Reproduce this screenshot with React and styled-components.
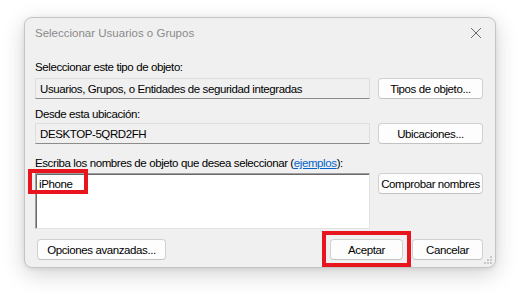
import React from 'react'
import styled, { createGlobalStyle } from 'styled-components'

const Global = createGlobalStyle`
  html, body { margin: 0; padding: 0; background: #ffffff; }
  body {
    font-family: "Liberation Sans", Arial, sans-serif;
    font-size: 11.5px;
    letter-spacing: -0.4px;
    color: #000;
  }
`

const Desktop = styled.div`
  width: 521px;
  height: 293px;
  padding: 17px 0 0 24px;
  box-sizing: border-box;
  overflow: hidden;
`

const Window = styled.div`
  position: relative;
  width: 472px;
  height: 251px;
  box-sizing: border-box;
  background: #f0f0f0;
  border: 1px solid #c4c4c4;
  border-radius: 8px;
  box-shadow: 0 6px 22px rgba(0, 0, 0, 0.18), 0 1px 4px rgba(0, 0, 0, 0.08);
  display: flex;
  flex-direction: column;
`

const TitleBar = styled.div`
  height: 30px;
  display: flex;
  align-items: center;
  justify-content: space-between;
  padding: 0 10px 0 10px;
  color: #8a8a8a;
  font-size: 11.5px;
  letter-spacing: 0;
`

const CloseBtn = styled.div`
  width: 12px;
  height: 12px;
  margin-right: 3px;
  display: flex;
`

const Body = styled.div`
  display: flex;
  flex-direction: column;
  padding: 10px 12px 0 10px;
`

const Label = styled.div`
  height: 16px;
  line-height: 16px;
  margin-top: ${p => p.$top || 0}px;
  white-space: nowrap;
`

const Link = styled.span`
  color: #0066cc;
  text-decoration: underline;
`

const Row = styled.div`
  display: flex;
  align-items: ${p => p.$align || 'center'};
  gap: 8px;
  margin-top: ${p => p.$top || 0}px;
`

const Field = styled.div`
  width: 335px;
  height: 21px;
  box-sizing: border-box;
  padding: 0 4px;
  display: flex;
  align-items: center;
  background: #f0f0f0;
  border: 1px solid #dedede;
  border-bottom-color: #8c8c8c;
  white-space: nowrap;
`

const TextArea = styled.div`
  position: relative;
  width: 335px;
  height: 56px;
  box-sizing: border-box;
  background: #ffffff;
  border-top: 1px solid #a0a0a0;
  border-left: 1px solid #a0a0a0;
  border-right: 1px solid #e3e3e3;
  border-bottom: 1px solid #e3e3e3;
  box-shadow: inset 1px 1px 0 #696969;
  padding: 4px 3px;
`

const Button = styled.div`
  width: ${p => p.$w}px;
  height: 21px;
  box-sizing: border-box;
  display: flex;
  align-items: center;
  justify-content: center;
  background: #fdfdfd;
  border: 1px solid #d0d0d0;
  border-bottom-color: #c2c2c2;
  border-radius: 4px;
  white-space: nowrap;
`

const Footer = styled.div`
  display: flex;
  align-items: center;
  margin-top: 10px;
  padding-left: 2px;
`

const Spacer = styled.div`
  flex: 1;
`

const Highlight = styled.div`
  position: relative;
  margin-right: ${p => p.$mr || 0}px;
  &::after {
    content: '';
    position: absolute;
    left: ${p => p.$l}px;
    top: ${p => p.$t}px;
    width: ${p => p.$w}px;
    height: ${p => p.$h}px;
    box-sizing: border-box;
    border: 4px solid #e8151f;
    pointer-events: none;
  }
`

const Grip = styled.svg`
  position: absolute;
  right: 3px;
  bottom: 3px;
`

export default function App() {
  return (
    <>
      <Global />
      <Desktop>
        <Window>
          <TitleBar>
            <span>Seleccionar Usuarios o Grupos</span>
            <CloseBtn>
              <svg width="12" height="12" viewBox="0 0 12 12">
                <path d="M1 1 L11 11 M11 1 L1 11" stroke="#6a6a6a" strokeWidth="1" fill="none" />
              </svg>
            </CloseBtn>
          </TitleBar>
          <Body>
            <Label $top={1}>Seleccionar este tipo de objeto:</Label>
            <Row $top={3}>
              <Field>Usuarios, Grupos, o Entidades de seguridad integradas</Field>
              <Button $w={105}>Tipos de objeto...</Button>
            </Row>
            <Label $top={7}>Desde esta ubicación:</Label>
            <Row $top={1}>
              <Field>DESKTOP-5QRD2FH</Field>
              <Button $w={105}>Ubicaciones...</Button>
            </Row>
            <Label $top={11}>
              Escriba los nombres de objeto que desea seleccionar (<Link>ejemplos</Link>):
            </Label>
            <Row $top={2} $align="flex-start">
              <Highlight $l={-7} $t={-4} $w={60} $h={25}>
                <TextArea>iPhone</TextArea>
              </Highlight>
              <Button $w={105}>Comprobar nombres</Button>
            </Row>
            <Footer>
              <Button $w={129}>Opciones avanzadas...</Button>
              <Spacer />
              <Highlight $mr={9} $l={-8} $t={-8} $w={89} $h={36}>
                <Button $w={73}>Aceptar</Button>
              </Highlight>
              <Button $w={71}>Cancelar</Button>
            </Footer>
          </Body>
          <Grip width="8" height="8" viewBox="0 0 8 8">
            <rect x="6" y="0" width="2" height="2" fill="#c8c8c8" />
            <rect x="3" y="3" width="2" height="2" fill="#c8c8c8" />
            <rect x="6" y="3" width="2" height="2" fill="#c8c8c8" />
            <rect x="0" y="6" width="2" height="2" fill="#c8c8c8" />
            <rect x="3" y="6" width="2" height="2" fill="#c8c8c8" />
            <rect x="6" y="6" width="2" height="2" fill="#c8c8c8" />
          </Grip>
        </Window>
      </Desktop>
    </>
  )
}
